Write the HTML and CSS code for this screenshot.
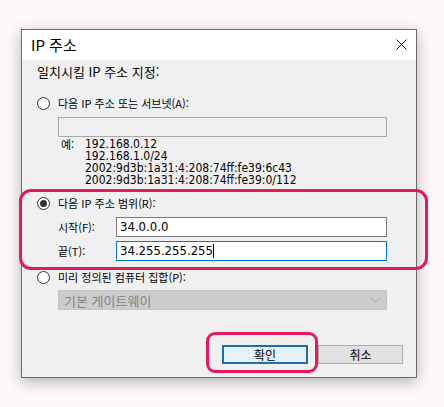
FILE: index.html
```html
<!DOCTYPE html>
<html lang="ko">
<head>
<meta charset="utf-8">
<link rel="stylesheet" href="styles.css">
</head>
<body>
<div class="dialog">
  <div class="titlebar">
    <span class="title">IP 주소</span>
    <svg class="close" width="11" height="11" viewBox="0 0 11 11"><path d="M0.5 0.5 L10.5 10.5 M10.5 0.5 L0.5 10.5" stroke="#111" stroke-width="1" fill="none"/></svg>
  </div>
  <div class="content">
    <div class="heading">일치시킬 IP 주소 지정:</div>

    <div class="radio-row r1"><span class="radio"></span><span class="label">다음 IP 주소 또는 서브넷(A):</span></div>
    <div class="indent">
      <div class="textbox disabled"></div>
      <div class="examples">
        <span class="ex-label">예:</span>
        <div class="ex-lines">
          <div>192.168.0.12</div>
          <div>192.168.1.0/24</div>
          <div>2002:9d3b:1a31:4:208:74ff:fe39:6c43</div>
          <div>2002:9d3b:1a31:4:208:74ff:fe39:0/112</div>
        </div>
      </div>
    </div>

    <div class="group highlight-range">
      <div class="radio-row r2"><span class="radio checked"></span><span class="label">다음 IP 주소 범위(R):</span></div>
      <div class="indent">
        <div class="field-row start"><span class="field-label">시작(F):</span><div class="textbox white">34.0.0.0</div></div>
        <div class="field-row end"><span class="field-label">끝(T):</span><div class="textbox white focus">34.255.255.255<span class="caret"></span></div></div>
      </div>
    </div>

    <div class="radio-row r3"><span class="radio"></span><span class="label">미리 정의된 컴퓨터 집합(P):</span></div>
    <div class="indent">
      <div class="combo">
        <span>기본 게이트웨이</span>
        <svg width="11" height="6" viewBox="0 0 11 6"><path d="M0.5 0.5 L5.5 5 L10.5 0.5" stroke="#a8a8a8" stroke-width="1" fill="none"/></svg>
      </div>
    </div>

    <div class="buttons">
      <div class="btn-wrap highlight-ok"><button class="btn default">확인</button></div>
      <button class="btn">취소</button>
    </div>
  </div>
</div>
</body>
</html>
```

FILE: styles.css
```css
html, body {
  margin: 0;
  padding: 0;
}
body {
  background: #fcf9f8;
  width: 444px;
  height: 407px;
  overflow: hidden;
  font-family: "Noto Sans CJK KR", "Noto Sans", sans-serif;
  color: #000;
}
.dialog {
  box-sizing: border-box;
  margin: 29px 0 0 21px;
  width: 396px;
  height: 349px;
  border: 1px solid #6a6a6a;
  background: #f0f0f0;
  box-shadow: 0 4px 14px rgba(0, 0, 0, 0.28);
  display: flex;
  flex-direction: column;
}
.titlebar {
  height: 30px;
  background: #fff;
  display: flex;
  align-items: center;
  justify-content: space-between;
  padding: 0 9px 0 9px;
}
.title {
  font-size: 15px;
  line-height: 30px;
}
.close {
  display: block;
  margin-top: -1px;
}
.content {
  flex: 1;
  padding: 0 13px 0 15px;
  display: flex;
  flex-direction: column;
  font-size: 12px;
}
.heading {
  font-size: 13px;
  line-height: 24px;
  height: 24px;
}
.radio-row {
  display: flex;
  align-items: center;
  height: 16px;
  gap: 8px;
}
.r1 { margin-top: 11px; }
.r2 { margin-top: 0; }
.r3 { margin-top: 8px; }
.radio {
  box-sizing: border-box;
  width: 13px;
  height: 13px;
  border: 1px solid #333;
  border-radius: 50%;
  background: #fff;
  display: flex;
  align-items: center;
  justify-content: center;
  flex: none;
}
.radio.checked::before {
  content: "";
  width: 7px;
  height: 7px;
  border-radius: 50%;
  background: #333;
}
.label {
  font-size: 11px;
  line-height: 16px;
}
.indent {
  margin-left: 21px;
}
.textbox {
  box-sizing: border-box;
  height: 20px;
  width: 329px;
  border: 1px solid #a8a8a8;
  background: #f0f0f0;
  margin-top: 6px;
}
.examples {
  display: flex;
  margin-top: 1px;
  font-family: "Liberation Sans Narrow", "DejaVu Sans Condensed", sans-serif;
  font-size: 12px;
  line-height: 12px;
}
.ex-label {
  width: 27px;
  padding-left: 3px;
  box-sizing: border-box;
  font-family: "Noto Sans CJK KR", sans-serif;
  font-size: 11px;
}
.group {
  margin-top: 9px;
  position: relative;
}
.highlight-range::after {
  content: "";
  position: absolute;
  left: -18px;
  top: -6px;
  right: -25px;
  bottom: -9px;
  border: 3px solid #e5195e;
  border-radius: 12px;
  pointer-events: none;
}
.field-row {
  display: flex;
  align-items: center;
}
.field-row.start { margin-top: 6px; }
.field-row.end { margin-top: 4px; }
.field-label {
  width: 58px;
  font-size: 11px;
}
.field-row .textbox {
  margin-top: 0;
  width: 271px;
  background: #fff;
  border-color: #7a7a7a;
  font-family: "Liberation Sans Narrow", "DejaVu Sans Condensed", sans-serif;
  font-size: 13px;
  line-height: 18px;
  padding-left: 3px;
  display: flex;
  align-items: center;
}
.field-row .textbox.focus {
  border-color: #0078d7;
}
.caret {
  display: inline-block;
  width: 1px;
  height: 14px;
  background: #000;
}
.combo {
  box-sizing: border-box;
  margin-top: 5px;
  height: 20px;
  width: 329px;
  background: #cccccc;
  border: 1px solid #c4c4c4;
  color: #858585;
  font-size: 13px;
  display: flex;
  align-items: center;
  justify-content: space-between;
  padding: 0 5px 0 5px;
}
.buttons {
  margin-top: 35px;
  display: flex;
  justify-content: flex-end;
  gap: 10px;
}
.btn-wrap {
  position: relative;
  display: flex;
}
.highlight-ok::after {
  content: "";
  position: absolute;
  left: -16px;
  top: -13px;
  right: -10px;
  bottom: -9px;
  border: 3px solid #e5195e;
  border-radius: 9px;
  pointer-events: none;
}
.btn {
  box-sizing: border-box;
  width: 85px;
  height: 19px;
  margin: 0;
  padding: 0;
  background: #e1e1e1;
  border: 1px solid #adadad;
  font-family: "Noto Sans CJK KR", sans-serif;
  font-size: 12px;
  line-height: 16px;
  color: #000;
}
.btn.default {
  width: 86px;
  border: 2px solid #1c6fae;
  background: #e5f1fb;
}
```
